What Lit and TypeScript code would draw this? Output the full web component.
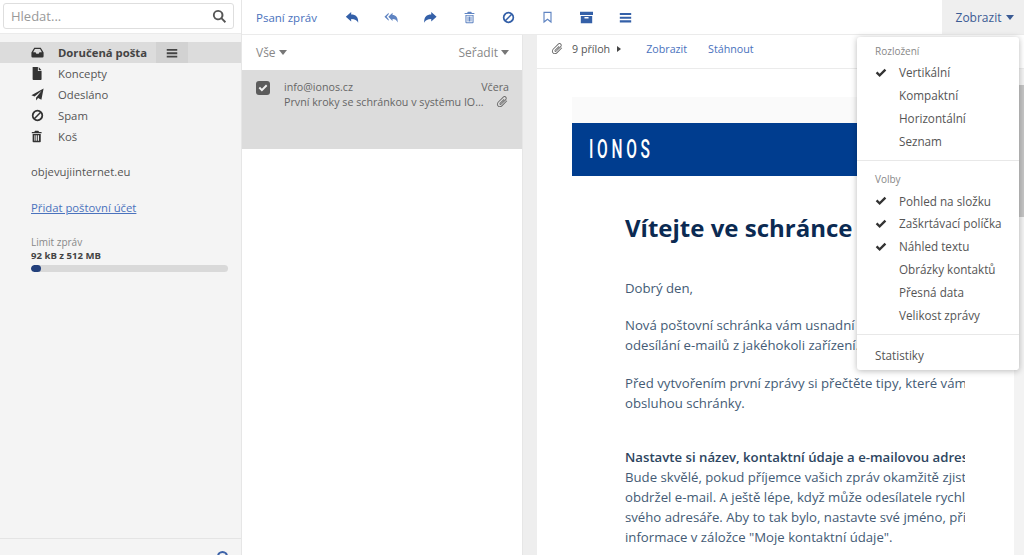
import { LitElement, html, css, svg } from "lit";
import { customElement } from "lit/decorators.js";

const ic = (vb: string, d: string, cls = "") =>
  html`<svg class="ic ${cls}" viewBox="${vb}" fill="currentColor" fill-rule="evenodd">${svg`<path d="${d}"></path>`}</svg>`;

const REPLY = "M1 6.5 L7.5 .8 V4 C13 4 16.5 7 16 14 C14.5 10.5 12 9.2 7.5 9.2 V12.5 Z";
const REPLY_ALL = "M5.5 6.5 L11 1.5 V4.4 C15 4.4 18 7.2 17.6 14 C16.2 10.7 14.4 9.3 11 9.3 V12 Z M.6 6.5 L6 1.5 V3.4 L3.4 6.5 L6 9.7 V11.7 Z";
const FORWARD = "M16.5 6.5 L10 .8 V4 C4.5 4 1 7 1.5 14 C3 10.5 5.5 9.2 10 9.2 V12.5 Z";
const TRASH = "M5 .8H9L10 2.4H13V4H1V2.4H4ZM2 5H12V14Q12 15 11 15H3Q2 15 2 14ZM4.2 6.5V13.3H5.4V6.5ZM6.4 6.5V13.3H7.6V6.5ZM8.6 6.5V13.3H9.8V6.5Z";
const TRASH_O = "M5 .8H9L10 2.4H13V3.8H1V2.4H4ZM2 4.8H12V13.8Q12 15 10.8 15H3.2Q2 15 2 13.8ZM3.3 5.8V13.7H10.7V5.8ZM4.6 6.8H5.8V12.8H4.6ZM6.4 6.8H7.6V12.8H6.4ZM8.2 6.8H9.4V12.8H8.2Z";
const BAN = "M8 1a7 7 0 1 0 0 14A7 7 0 0 0 8 1Zm0 2.2c1 0 1.9.3 2.7.8L4 10.7A4.8 4.8 0 0 1 8 3.2Zm0 9.6c-1 0-1.9-.3-2.7-.8L12 5.3a4.8 4.8 0 0 1-4 7.5Z";
const BOOKMARK = "M2 1H12V15L7 11L2 15ZM3.4 2.4V12L7 9.2L10.6 12V2.4Z";
const ARCHIVE = "M0 1H16V5H0ZM1 6H15V15H1ZM5.5 7.5V9.3H10.5V7.5Z";
const BARS = "M1 2.5H15V5H1ZM1 7H15V9.5H1ZM1 11.5H15V14H1Z";
const CHECK = "M1 8.2L3.2 6L6.2 9L12.8 2.4L15 4.6L6.2 13.4Z";
const INBOX = "M4 2H12L15.5 8V12.5Q15.5 14 14 14H2Q.5 14 .5 12.5V8ZM4.8 3.6L2.6 7.6H5.6L6.6 9.4H9.4L10.4 7.6H13.4L11.2 3.6Z";
const FILE = "M2 0H8.5V5H13V15Q13 16 12 16H3Q2 16 2 15ZM9.5 0L13 4H9.5Z";
const SEND = "M15.5.5L12.8 14.5L8.7 12.2L6.2 15.3V12L13 3.5L4.4 10.6L.5 8.8Z";
const CLIP = "M13.8 7.5L7.6 13.7C6 15.3 3.6 15.3 2.2 13.8C.7 12.3.8 10 2.3 8.5L8.6 2.2C9.7 1.1 11.4 1.1 12.4 2.2C13.5 3.2 13.4 4.9 12.4 6L6.6 11.7C6 12.3 5.1 12.3 4.6 11.8C4.1 11.3 4.1 10.4 4.7 9.8L9.6 5L10.4 5.8L5.6 10.6C5.3 10.9 5.2 11.1 5.4 11.2C5.6 11.4 5.8 11.3 6 11.1L11.6 5.3C12.2 4.7 12.3 3.7 11.6 3C10.9 2.3 9.9 2.4 9.3 3L3 9.3C1.9 10.4 1.9 12 3 13.1C4.1 14.1 5.7 14.1 6.8 13L13 6.8Z";
const SEARCH = "M6.5 1a5.5 5.5 0 1 0 3.3 9.9L13.6 14.8L15 13.4L11.2 9.6A5.5 5.5 0 0 0 6.5 1Zm0 1.9a3.6 3.6 0 1 1 0 7.2a3.6 3.6 0 0 1 0-7.2Z";

const folders = [
  { name: "Doručená pošta", d: INBOX, active: true },
  { name: "Koncepty", d: FILE },
  { name: "Odesláno", d: SEND },
  { name: "Spam", d: BAN },
  { name: "Koš", d: TRASH },
];

@customElement("app-root")
export class AppRoot extends LitElement {
  static styles = css`
    :host { display: block; width: 1024px; height: 555px; overflow: hidden; position: relative; font-family: "Open Sans", sans-serif; font-size: 12px; color: #555; background: #fff; }
    .ic { display: block; width: 16px; height: 16px; flex: none; }
    .app { display: flex; height: 555px; }
    .side { width: 241px; flex: none; background: #f4f4f4; border-right: 1px solid #e6e6e6; display: flex; flex-direction: column; }
    .searchwrap { height: 34px; box-sizing: border-box; background: #fff; border-bottom: 1px solid #ebebeb; padding: 3px 7px 0 3px; flex: none; }
    .search { height: 26px; box-sizing: border-box; border: 1px solid #dedede; border-radius: 3px; display: flex; align-items: center; justify-content: space-between; padding: 0 6px 0 7px; color: #999; font-size: 13px; background: #fff; }
    .search .ic { width: 15px; height: 15px; color: #555; }
    .folders { padding-top: 8px; }
    .folder { height: 21px; display: flex; align-items: center; color: #555; font-size: 11.3px; position: relative; }
    .folder .ic { width: 13px; height: 13px; margin-left: 31px; margin-right: 14px; color: #333; }
    .folder.active { background: #dcdcdc; font-weight: 700; color: #444; }
    .fmenu { position: absolute; left: 156px; top: 0; width: 32px; height: 21px; background: #d2d2d2; display: flex; align-items: center; justify-content: center; }
    .folder .fmenu .ic { margin: 0; width: 12px; height: 12px; color: #444; }
    .domain { padding: 17px 0 0 31px; font-size: 11.3px; color: #555; line-height: 16px; }
    .add { margin: 20px 0 0 31px; font-size: 11.3px; color: #4a72bd; text-decoration: underline; line-height: 16px; }
    .limit { margin: 20px 0 0 31px; width: 197px; }
    .limit .l { font-size: 10px; color: #888; line-height: 13px; }
    .limit .v { font-size: 9.6px; font-weight: 700; color: #444; line-height: 13px; }
    .bar { height: 7px; border-radius: 4px; background: #d9d9d9; margin-top: 3px; overflow: hidden; }
    .bar div { height: 100%; width: 10px; background: #23407c; border-radius: 4px; }
    .spacer { flex: 1; }
    .sfoot { height: 16px; flex: none; border-top: 1px solid #e4e4e4; position: relative; }
    .help { position: absolute; left: 217px; top: 12px; width: 11px; height: 11px; border: 2px solid #3c62a8; border-radius: 50%; box-sizing: border-box; }
    .main { flex: 1; display: flex; flex-direction: column; min-width: 0; }
    .tools { height: 35px; flex: none; box-sizing: border-box; border-bottom: 1px solid #ebebeb; display: flex; align-items: center; color: #3d66b0; position: relative; }
    .compose { margin-left: 14px; font-size: 11.5px; width: 89px; color: #4a72bd; }
    .tool { width: 39.2px; display: flex; justify-content: flex-start; color: #3460a8; }
    .tool .ic { width: 13px; height: 13px; }
    .tool.w .ic { width: 14px; height: 13px; }
    .tool.light { color: #5f84c2; }
    .view { position: absolute; right: 0; top: 0; width: 82px; height: 34px; box-sizing: border-box; padding-left: 4px; background: #efefef; display: flex; align-items: center; justify-content: center; gap: 5px; color: #3b5b94; font-size: 12px; }
    .caret { width: 0; height: 0; border-left: 4px solid transparent; border-right: 4px solid transparent; border-top: 5px solid currentColor; display: inline-block; }
    .panes { flex: 1; display: flex; min-height: 0; }
    .list { width: 280px; flex: none; border-right: 1px solid #e6e6e6; display: flex; flex-direction: column; background: #fff; }
    .lhead { height: 35px; flex: none; display: flex; align-items: center; justify-content: space-between; padding: 0 13px 0 14px; color: #888; font-size: 12px; box-sizing: border-box; }
    .lhead span { display: flex; align-items: center; gap: 3px; }
    .lhead .caret { color: #777; }
    .msg { height: 79px; background: #dcdcdc; box-sizing: border-box; padding: 10px 13px 10px 14px; display: flex; gap: 14px; color: #666; font-size: 10.7px; line-height: 14.5px; }
    .cb { width: 14px; height: 14px; background: #5c5c5c; border-radius: 3px; color: #f0f0f0; margin-top: 1px; display: flex; align-items: center; justify-content: center; flex: none; }
    .cb .ic { width: 10px; height: 10px; }
    .mbody { flex: 1; min-width: 0; }
    .mrow { display: flex; justify-content: space-between; }
    .mrow .ic { width: 13px; height: 13px; color: #666; }
    .gap { width: 14px; flex: none; background: #eeeeee; }
    .preview { flex: 1; min-width: 0; display: flex; flex-direction: column; background: #fff; }
    .pbar { height: 34px; flex: none; border-bottom: 1px solid #ebebeb; box-sizing: border-box; display: flex; align-items: center; padding: 0 0 6px 14px; font-size: 10.7px; color: #555; }
    .pbar .ic { width: 13px; height: 13px; color: #666; margin-right: 8px; }
    .pbar .tri { width: 0; height: 0; border-top: 3.5px solid transparent; border-bottom: 3.5px solid transparent; border-left: 4px solid #444; margin: 0 25px 0 7px; }
    .pbar a { color: #4a72bd; margin-right: 21px; }
    .pbody { flex: 1; min-height: 0; display: flex; position: relative; }
    .mail { width: 428px; margin-left: 35px; flex: none; overflow: hidden; }
    .mtop { height: 26px; margin-top: 28px; background: #fafafa; }
    .banner { height: 53px; background: #003d8f; display: flex; align-items: center; padding-left: 17px; overflow: hidden; }
    .banner span { color: #fff; font-family: "Roboto", sans-serif; font-weight: 500; font-size: 25px; letter-spacing: 6px; transform: scaleX(.62); transform-origin: left center; }
    .content { margin-right: 35px; overflow: hidden; padding: 35px 0 0 53px; color: #445b75; font-size: 13.2px; line-height: 19.8px; }
    h1 { margin: 0 0 35px; font-size: 24px; line-height: 33px; font-weight: 700; color: #0b2a52; white-space: nowrap; }
    .content p { margin: 0 0 18.2px; white-space: nowrap; }
    .content p.first { margin-bottom: 17.2px; }
    .content p.sec { margin-top: 35px; }
    .content b { color: #2d4560; font-weight: 600; }
    .rail { flex: 1; position: relative; }
    .railbg { position: absolute; left: 35px; right: 0; top: 0; bottom: 0; background: #eeeeee; }
    .track { position: absolute; right: 0; top: 0; bottom: 0; width: 10px; background: #f3f3f3; }
    .thumb { position: absolute; right: 0; top: 16px; width: 10px; height: 132px; background: #c4c4c4; }
    .menu { position: absolute; left: 857px; top: 37px; width: 162px; height: 333px; box-sizing: border-box; background: #fff; border-radius: 3px; box-shadow: 0 1px 6px rgba(0,0,0,.28); color: #555; font-size: 11.7px; padding-top: 6px; }
    .mh { height: 16px; line-height: 16px; padding-left: 18px; font-size: 10px; color: #888; margin-bottom: 2px; }
    .mi { height: 22.8px; display: flex; align-items: center; padding-left: 42px; position: relative; }
    .mi .ic { position: absolute; left: 18px; top: 6px; width: 12px; height: 12px; color: #333; }
    .sep { height: 1px; background: #e8e8e8; }
    .s1 { margin: 8px 0 10px; }
    .s2 { margin: 8px 0 9px; }
    .mf { padding-left: 18px; font-size: 11.7px; line-height: 22px; }
  `;

  render() {
    const tools = [
      ["0 0 17 15", REPLY, "w", ""],
      ["0 0 18 15", REPLY_ALL, "w", "light"],
      ["0 0 17 15", FORWARD, "w", ""],
      ["0 0 14 16", TRASH_O, "", "light"],
      ["0 0 16 16", BAN, "", ""],
      ["0 0 14 16", BOOKMARK, "", "light"],
      ["0 0 16 16", ARCHIVE, "", ""],
      ["0 0 16 16", BARS, "", ""],
    ];
    return html`
      <div class="app">
        <aside class="side">
          <div class="searchwrap"><div class="search"><span>Hledat...</span>${ic("0 0 16 16", SEARCH)}</div></div>
          <div class="folders">
            ${folders.map(f => html`<div class="folder ${f.active ? "active" : ""}">${ic("0 0 16 16", f.d)}<span>${f.name}</span>${f.active ? html`<div class="fmenu">${ic("0 0 16 16", BARS)}</div>` : ""}</div>`)}
          </div>
          <div class="domain">objevujiinternet.eu</div>
          <div class="add">Přidat poštovní účet</div>
          <div class="limit">
            <div class="l">Limit zpráv</div>
            <div class="v">92 kB z 512 MB</div>
            <div class="bar"><div></div></div>
          </div>
          <div class="spacer"></div>
          <div class="sfoot"><div class="help"></div></div>
        </aside>
        <div class="main">
          <div class="tools">
            <div class="compose">Psaní zpráv</div>
            ${tools.map(t => html`<div class="tool ${t[2]} ${t[3]}">${ic(t[0], t[1])}</div>`)}
            <div class="view">Zobrazit <i class="caret"></i></div>
          </div>
          <div class="panes">
            <section class="list">
              <div class="lhead"><span>Vše <i class="caret"></i></span><span>Seřadit <i class="caret"></i></span></div>
              <div class="msg">
                <div class="cb">${ic("0 0 16 16", CHECK)}</div>
                <div class="mbody">
                  <div class="mrow"><span>info@ionos.cz</span><span>Včera</span></div>
                  <div class="mrow"><span>První kroky se schránkou v systému IO...</span>${ic("0 0 16 16", CLIP)}</div>
                </div>
              </div>
            </section>
            <div class="gap"></div>
            <section class="preview">
              <div class="pbar">${ic("0 0 16 16", CLIP)}<span>9 příloh</span><i class="tri"></i><a>Zobrazit</a><a>Stáhnout</a></div>
              <div class="pbody">
                <div class="mail">
                  <div class="mtop"></div>
                  <div class="banner"><span>IONOS</span></div>
                  <div class="content">
                    <h1>Vítejte ve schránce</h1>
                    <p class="first">Dobrý den,</p>
                    <p>Nová poštovní schránka vám usnadní práci<br>odesílání e-mailů z jakéhokoli zařízení.</p>
                    <p>Před vytvořením první zprávy si přečtěte tipy, které vám<br>obsluhou schránky.</p>
                    <p class="sec"><b>Nastavte si název, kontaktní údaje a e-mailovou adresu</b><br>Bude skvělé, pokud příjemce vašich zpráv okamžitě zjistí<br>obdržel e-mail. A ještě lépe, když může odesílatele rychle<br>svého adresáře. Aby to tak bylo, nastavte své jméno, příjmení<br>informace v záložce "Moje kontaktní údaje".</p>
                  </div>
                </div>
                <div class="rail"><div class="railbg"></div><div class="track"></div><div class="thumb"></div></div>
              </div>
            </section>
          </div>
        </div>
      </div>
      <div class="menu">
        <div class="mh">Rozložení</div>
        <div class="mi">${ic("0 0 16 16", CHECK)}Vertikální</div>
        <div class="mi">Kompaktní</div>
        <div class="mi">Horizontální</div>
        <div class="mi">Seznam</div>
        <div class="sep s1"></div>
        <div class="mh">Volby</div>
        <div class="mi">${ic("0 0 16 16", CHECK)}Pohled na složku</div>
        <div class="mi">${ic("0 0 16 16", CHECK)}Zaškrtávací políčka</div>
        <div class="mi">${ic("0 0 16 16", CHECK)}Náhled textu</div>
        <div class="mi">Obrázky kontaktů</div>
        <div class="mi">Přesná data</div>
        <div class="mi">Velikost zprávy</div>
        <div class="sep s2"></div>
        <div class="mf">Statistiky</div>
      </div>
    `;
  }
}
